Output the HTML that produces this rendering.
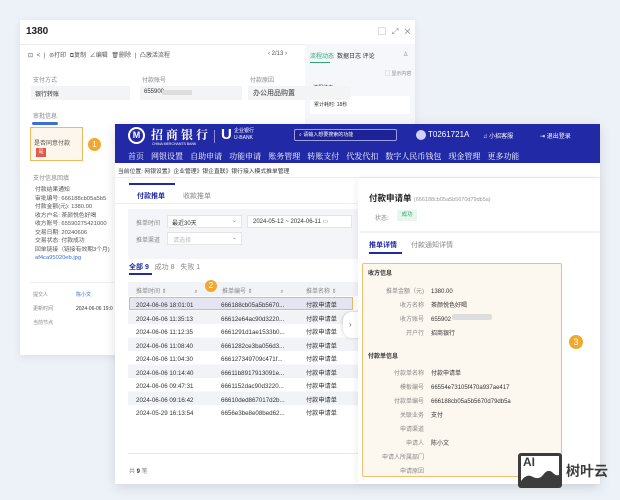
<!DOCTYPE html>
<html><head><meta charset="utf-8"><style>
*{box-sizing:border-box;margin:0;padding:0}
body{width:620px;height:500px;background:#edf2f8;font-family:"Liberation Sans","Noto Sans CJK SC",sans-serif;position:relative;overflow:hidden;color:#333}
.a{position:absolute;white-space:nowrap}
.s7{font-size:7px}.s6{font-size:6px}.s8{font-size:8px}
.g{color:#888}
</style></head><body>
<!-- back window -->
<div class="a" style="left:20px;top:20px;width:395px;height:335px;background:#fff;box-shadow:0 2px 8px rgba(0,0,0,.08)"></div>
<div class="a" style="left:26px;top:26px;font-size:10px;font-weight:bold;color:#222">1380</div>
<div class="a s8 g" style="left:378px;top:26px;letter-spacing:6px">▢⤢✕</div>
<div class="a" style="left:20px;top:44px;width:285px;height:1px;background:#eee"></div>
<div class="a s6" style="left:28px;top:50px;color:#555;word-spacing:2px">⊡ &lt; | ⊜打印 ⧉复制 ∠编辑 🗑删除 | 凸激活流程</div>
<div class="a s6" style="left:268px;top:51px;color:#555">‹ 2/13 ›</div>
<div class="a" style="left:305px;top:44px;width:110px;height:311px;background:#f5f7fa"></div>
<div class="a s6" style="left:310px;top:51px;color:#2aa876">流程动态</div>
<div class="a" style="left:310px;top:62px;width:20px;height:1px;background:#2aa876"></div>
<div class="a s6" style="left:337px;top:51px">数据日志 评论</div>
<div class="a s6 g" style="left:403px;top:51px">♙</div>
<div class="a" style="left:385px;top:70px;font-size:5px;color:#888">▢ 显示内容</div>
<div class="a" style="left:310px;top:84px;font-size:5px">• 流程结束</div>
<div class="a" style="left:310px;top:96px;width:100px;height:18px;background:#fff"></div>
<div class="a" style="left:314px;top:101px;font-size:5px">累计耗时: 18秒</div>
<div class="a s6 g" style="left:33px;top:75px">支付方式</div>
<div class="a s6 g" style="left:142px;top:75px">付款账号</div>
<div class="a s6 g" style="left:250px;top:75px">付款原因</div>
<div class="a" style="left:31px;top:86px;width:99px;height:14px;background:#f3f4f6"></div>
<div class="a" style="left:140px;top:86px;width:102px;height:14px;background:#f3f4f6"></div>
<div class="a" style="left:248px;top:86px;width:102px;height:14px;background:#f3f4f6"></div>
<div class="a s6" style="left:35px;top:89px">银行转账</div>
<div class="a s6" style="left:144px;top:89px">655900</div>
<div class="a" style="left:162px;top:90px;width:30px;height:5px;background:#ddd"></div>
<div class="a s7" style="left:253px;top:88px">办公用品购置</div>
<div class="a s6 g" style="left:33px;top:111px">审批信息</div>
<div class="a" style="left:32px;top:122px;width:26px;height:3px;background:#3a6fd8;border-radius:2px"></div>
<div class="a" style="left:30px;top:127px;width:53px;height:34px;border:1px solid #f0b860;background:#fdf6ec"></div>
<div class="a s6" style="left:34px;top:138px;color:#555">是否同意付款</div>
<div class="a" style="left:36px;top:148px;width:10px;height:9px;background:#e05b4f;color:#fff;font-size:5px;text-align:center;line-height:9px">是</div>
<div class="a" style="left:88px;top:138px;width:13px;height:13px;border-radius:50%;background:#f0a830;color:#fff;font-size:8px;text-align:center;line-height:13px">1</div>
<div class="a s6 g" style="left:33px;top:173px">支付信息回填</div>
<div class="a" style="left:35px;top:186px;font-size:5.8px;line-height:8.5px;color:#555">付款结果通知<br>审批编号: 666188cb05a5b5<br>付款金额(元): 1380.00<br>收方户名: 茶颜悦色好喝<br>收方账号: 65590275421000<br>交易日期: 20240606<br>交易状态: 付款成功<br>回单链接（链接有效期3个月)<br><span style="color:#3a6fd8">af4ca95020eb.jpg</span></div>
<div class="a" style="left:30px;top:282px;width:85px;height:1px;background:#eee"></div>
<div class="a" style="left:33px;top:288px;font-size:5px;color:#888;line-height:14px">提交人<br>更新时间<br>当前节点</div>
<div class="a" style="left:76px;top:288px;font-size:5px;line-height:14px"><span style="color:#3a6fd8">陈小文</span><br>2024-06-06 19:0</div>

<!-- bank window -->
<div class="a" style="left:115px;top:124px;width:485px;height:360px;background:#fff;box-shadow:0 3px 12px rgba(0,0,0,.12)"></div>
<div class="a" style="left:115px;top:124px;width:485px;height:39px;background:#2129a6"></div>
<div class="a" style="left:128px;top:127px;width:17px;height:17px;border-radius:50%;border:2px solid #fff;color:#fff;font-size:9px;text-align:center;line-height:13px;font-weight:bold">M</div>
<div class="a" style="left:151px;top:126px;color:#fff;font-size:12px;font-weight:bold;letter-spacing:3px;font-family:'Noto Serif CJK SC',serif">招商银行</div>
<div class="a" style="left:152px;top:142px;color:#fff;font-size:3.5px">CHINA MERCHANTS BANK</div>
<div class="a" style="left:214px;top:130px;width:1px;height:13px;background:#8a90d8"></div>
<div class="a" style="left:221px;top:126px;color:#fff;font-size:15px;font-weight:bold">U</div>
<div class="a" style="left:234px;top:128px;color:#fff;font-size:5px;line-height:7px">企业银行<br>U-BANK</div>
<div class="a" style="left:294px;top:129px;width:103px;height:12px;border:1px solid #9aa0e0;border-radius:2px;background:#1d2396;color:#fff;font-size:5px;line-height:10px;padding-left:4px">⌕ 请输入想要搜索的功能</div>
<div class="a" style="left:416px;top:130px;width:10px;height:10px;border-radius:50%;background:#cfd3f5"></div>
<div class="a" style="left:428px;top:130px;color:#fff;font-size:8px">T0261721A</div>
<div class="a" style="left:483px;top:131px;color:#fff;font-size:6px">♫ 小招客服</div>
<div class="a" style="left:540px;top:131px;color:#fff;font-size:6px">⇥ 退出登录</div>
<div class="a" style="left:128px;top:151px;color:#fff;font-size:8px;word-spacing:5px;font-family:'Noto Serif CJK SC',serif">首页 网银设置 自助申请 功能申请 账务管理 转账支付 代发代扣 数字人民币钱包 现金管理 更多功能</div>
<div class="a" style="left:118px;top:166px;font-size:5.8px;color:#333">当前位置: 网银设置》企业管理》银企直联》银行接入模式推单管理</div>
<div class="a" style="left:115px;top:177px;width:485px;height:1px;background:#eee"></div>
<!-- left list -->
<div class="a" style="left:129px;top:183px;width:46px;height:2px;background:#2129a6"></div>
<div class="a s7" style="left:137px;top:191px;color:#2129a6;font-weight:bold">付款推单</div>
<div class="a s7 g" style="left:183px;top:191px">收款推单</div>
<div class="a" style="left:115px;top:203px;width:243px;height:1px;background:#eee"></div>
<div class="a" style="left:128px;top:209px;width:230px;height:50px;background:#f4f5f8"></div>
<div class="a s6 g" style="left:136px;top:218px">推单时间</div>
<div class="a" style="left:167px;top:215px;width:75px;height:13px;background:#fff;border:1px solid #e5e5e5"></div>
<div class="a s6" style="left:172px;top:218px">最近30天</div>
<div class="a s6 g" style="left:232px;top:217px">⌄</div>
<div class="a" style="left:247px;top:215px;width:105px;height:13px;background:#fff;border:1px solid #e5e5e5"></div>
<div class="a s6" style="left:253px;top:218px">2024-05-12 ~ 2024-06-11 <span class="g">▭</span></div>
<div class="a s6 g" style="left:136px;top:235px">推单渠道</div>
<div class="a" style="left:167px;top:232px;width:75px;height:13px;background:#fff;border:1px solid #e5e5e5"></div>
<div class="a s6" style="left:173px;top:235px;color:#bbb">请选择</div>
<div class="a s6 g" style="left:232px;top:234px">⌄</div>
<div class="a s7" style="left:129px;top:262px"><b style="color:#2129a6">全部 9</b> <span class="g">&nbsp; 成功 8 &nbsp; 失败 1</span></div>
<div class="a" style="left:129px;top:273px;width:23px;height:2px;background:#2129a6"></div>
<div class="a" style="left:128px;top:282px;width:230px;height:14px;background:#f2f3f6"></div>
<div class="a s6 g" style="left:136px;top:286px">推单时间 ⇕ <span style="margin-left:26px">⌕</span></div>
<div class="a s6 g" style="left:222px;top:286px">推单编号 ⇕ <span style="margin-left:26px">⌕</span></div>
<div class="a s6 g" style="left:306px;top:286px">推单名称 ⇕</div>
<div class="a" style="left:205px;top:280px;width:12px;height:12px;border-radius:50%;background:#f0a830;color:#fff;font-size:8px;text-align:center;line-height:12px">2</div>
<div class="a" style="left:128px;top:297px;width:230px;height:121px;background:repeating-linear-gradient(#fff 0 13.5px,#f2f3f6 13.5px 27px)"></div>
<div class="a" style="left:129px;top:297px;width:224px;height:13px;background:#e4e5f0;border:1px solid #f0b860"></div>
<div class="a" style="left:136px;top:299px;font-size:6.2px;line-height:13.5px;color:#333">2024-06-06 18:01:01<br>2024-06-06 11:35:13<br>2024-06-06 11:12:35<br>2024-06-06 11:08:40<br>2024-06-06 11:04:30<br>2024-06-06 10:14:40<br>2024-06-06 09:47:31<br>2024-06-06 09:16:42<br>2024-05-29 16:13:54</div>
<div class="a" style="left:221px;top:299px;font-size:6.2px;line-height:13.5px;color:#333">666188cb05a5b5670...<br>66612e64ac90d3220...<br>6661291d1ae1533b0...<br>6661282ce3ba056d3...<br>666127349709c471f...<br>66611b8917913091e...<br>6661152dac90d3220...<br>66610ded867017d2b...<br>6656e3be8e08bed62...</div>
<div class="a" style="left:306px;top:299px;font-size:6.2px;line-height:13.5px;color:#333">付款申请单<br>付款申请单<br>付款申请单<br>付款申请单<br>付款申请单<br>付款申请单<br>付款申请单<br>付款申请单<br>付款申请单</div>
<div class="a" style="left:128px;top:453px;width:230px;height:1px;background:#e8e8e8"></div>
<div class="a s6 g" style="left:129px;top:466px">共 <b style="color:#333">9</b> 笔</div>
<div class="a" style="left:343px;top:312px;width:18px;height:26px;border-radius:9px 0 0 9px;background:#fff;box-shadow:-1px 0 3px rgba(0,0,0,.15);color:#666;font-size:8px;line-height:26px;padding-left:6px">›</div>
<!-- right detail -->
<div class="a" style="left:358px;top:178px;width:242px;height:306px;background:#fff;box-shadow:-2px 0 6px rgba(0,0,0,.06)"></div>
<div class="a" style="left:369px;top:192px;font-size:8.5px;font-weight:bold;color:#222">付款申请单 <span style="font-size:5.5px;font-weight:normal;color:#999">(666188cb05a5b5670d79db5a)</span></div>
<div class="a s6 g" style="left:375px;top:213px">状态:</div>
<div class="a" style="left:397px;top:210px;width:20px;height:11px;background:#e8f6ee;color:#2aa876;font-size:5.5px;text-align:center;line-height:11px">成功</div>
<div class="a" style="left:360px;top:231px;width:240px;height:2px;background:#f0f1f4"></div>
<div class="a s7" style="left:369px;top:240px;color:#2129a6;font-weight:bold">推单详情</div>
<div class="a s7 g" style="left:411px;top:240px">付款通知详情</div>
<div class="a" style="left:369px;top:252px;width:33px;height:2px;background:#2129a6"></div>
<div class="a" style="left:362px;top:263px;width:200px;height:214px;background:#fdf8ef;border:1px solid #f0c070;border-radius:2px"></div>
<div class="a s6" style="left:368px;top:268px;font-weight:bold">收方信息</div>
<div class="a s6 g" style="left:368px;top:285px;width:56px;text-align:right;line-height:14px">推单金额（元)<br>收方名称<br>收方账号<br>开户行</div>
<div class="a s6" style="left:431px;top:285px;line-height:14px">1380.00<br>茶颜悦色好喝<br>655902<br>招商银行</div>
<div class="a" style="left:452px;top:314px;width:40px;height:6px;background:#ddd;border-radius:2px"></div>
<div class="a s6" style="left:368px;top:351px;font-weight:bold">付款单信息</div>
<div class="a s6 g" style="left:368px;top:367px;width:56px;text-align:right;line-height:14px">付款单名称<br>模板编号<br>付款单编号<br>关联业务<br>申请渠道<br>申请人<br>申请人所属部门<br>申请原因</div>
<div class="a s6" style="left:431px;top:367px;line-height:14px">付款申请单<br>66554e73105f470a937ae417<br>666188cb05a5b5670d79db5a<br>支付<br><br>陈小文</div>
<div class="a" style="left:569px;top:335px;width:14px;height:14px;border-radius:50%;background:#f0a830;color:#fff;font-size:9px;text-align:center;line-height:14px">3</div>
<!-- logo -->
<div class="a" style="left:518px;top:453px;width:44px;height:35px;background:#3c3c3c;border-radius:3px"></div>
<div class="a" style="left:521px;top:456px;width:38px;height:29px;background:#fff"></div>
<div class="a" style="left:523px;top:456px;font-size:12px;line-height:13px;font-weight:bold;color:#3c3c3c">AI</div>
<svg class="a" style="left:521px;top:467px" width="38" height="18"><path d="M0 14 Q6 6 12 10 Q18 13 22 8 Q27 1 32 6 Q35 9 38 8 L38 18 L0 18Z" fill="#3c3c3c"/></svg>
<div class="a" style="left:566px;top:461px;font-size:14px;font-weight:bold;color:#3c3c3c">树叶云</div>
</body></html>
